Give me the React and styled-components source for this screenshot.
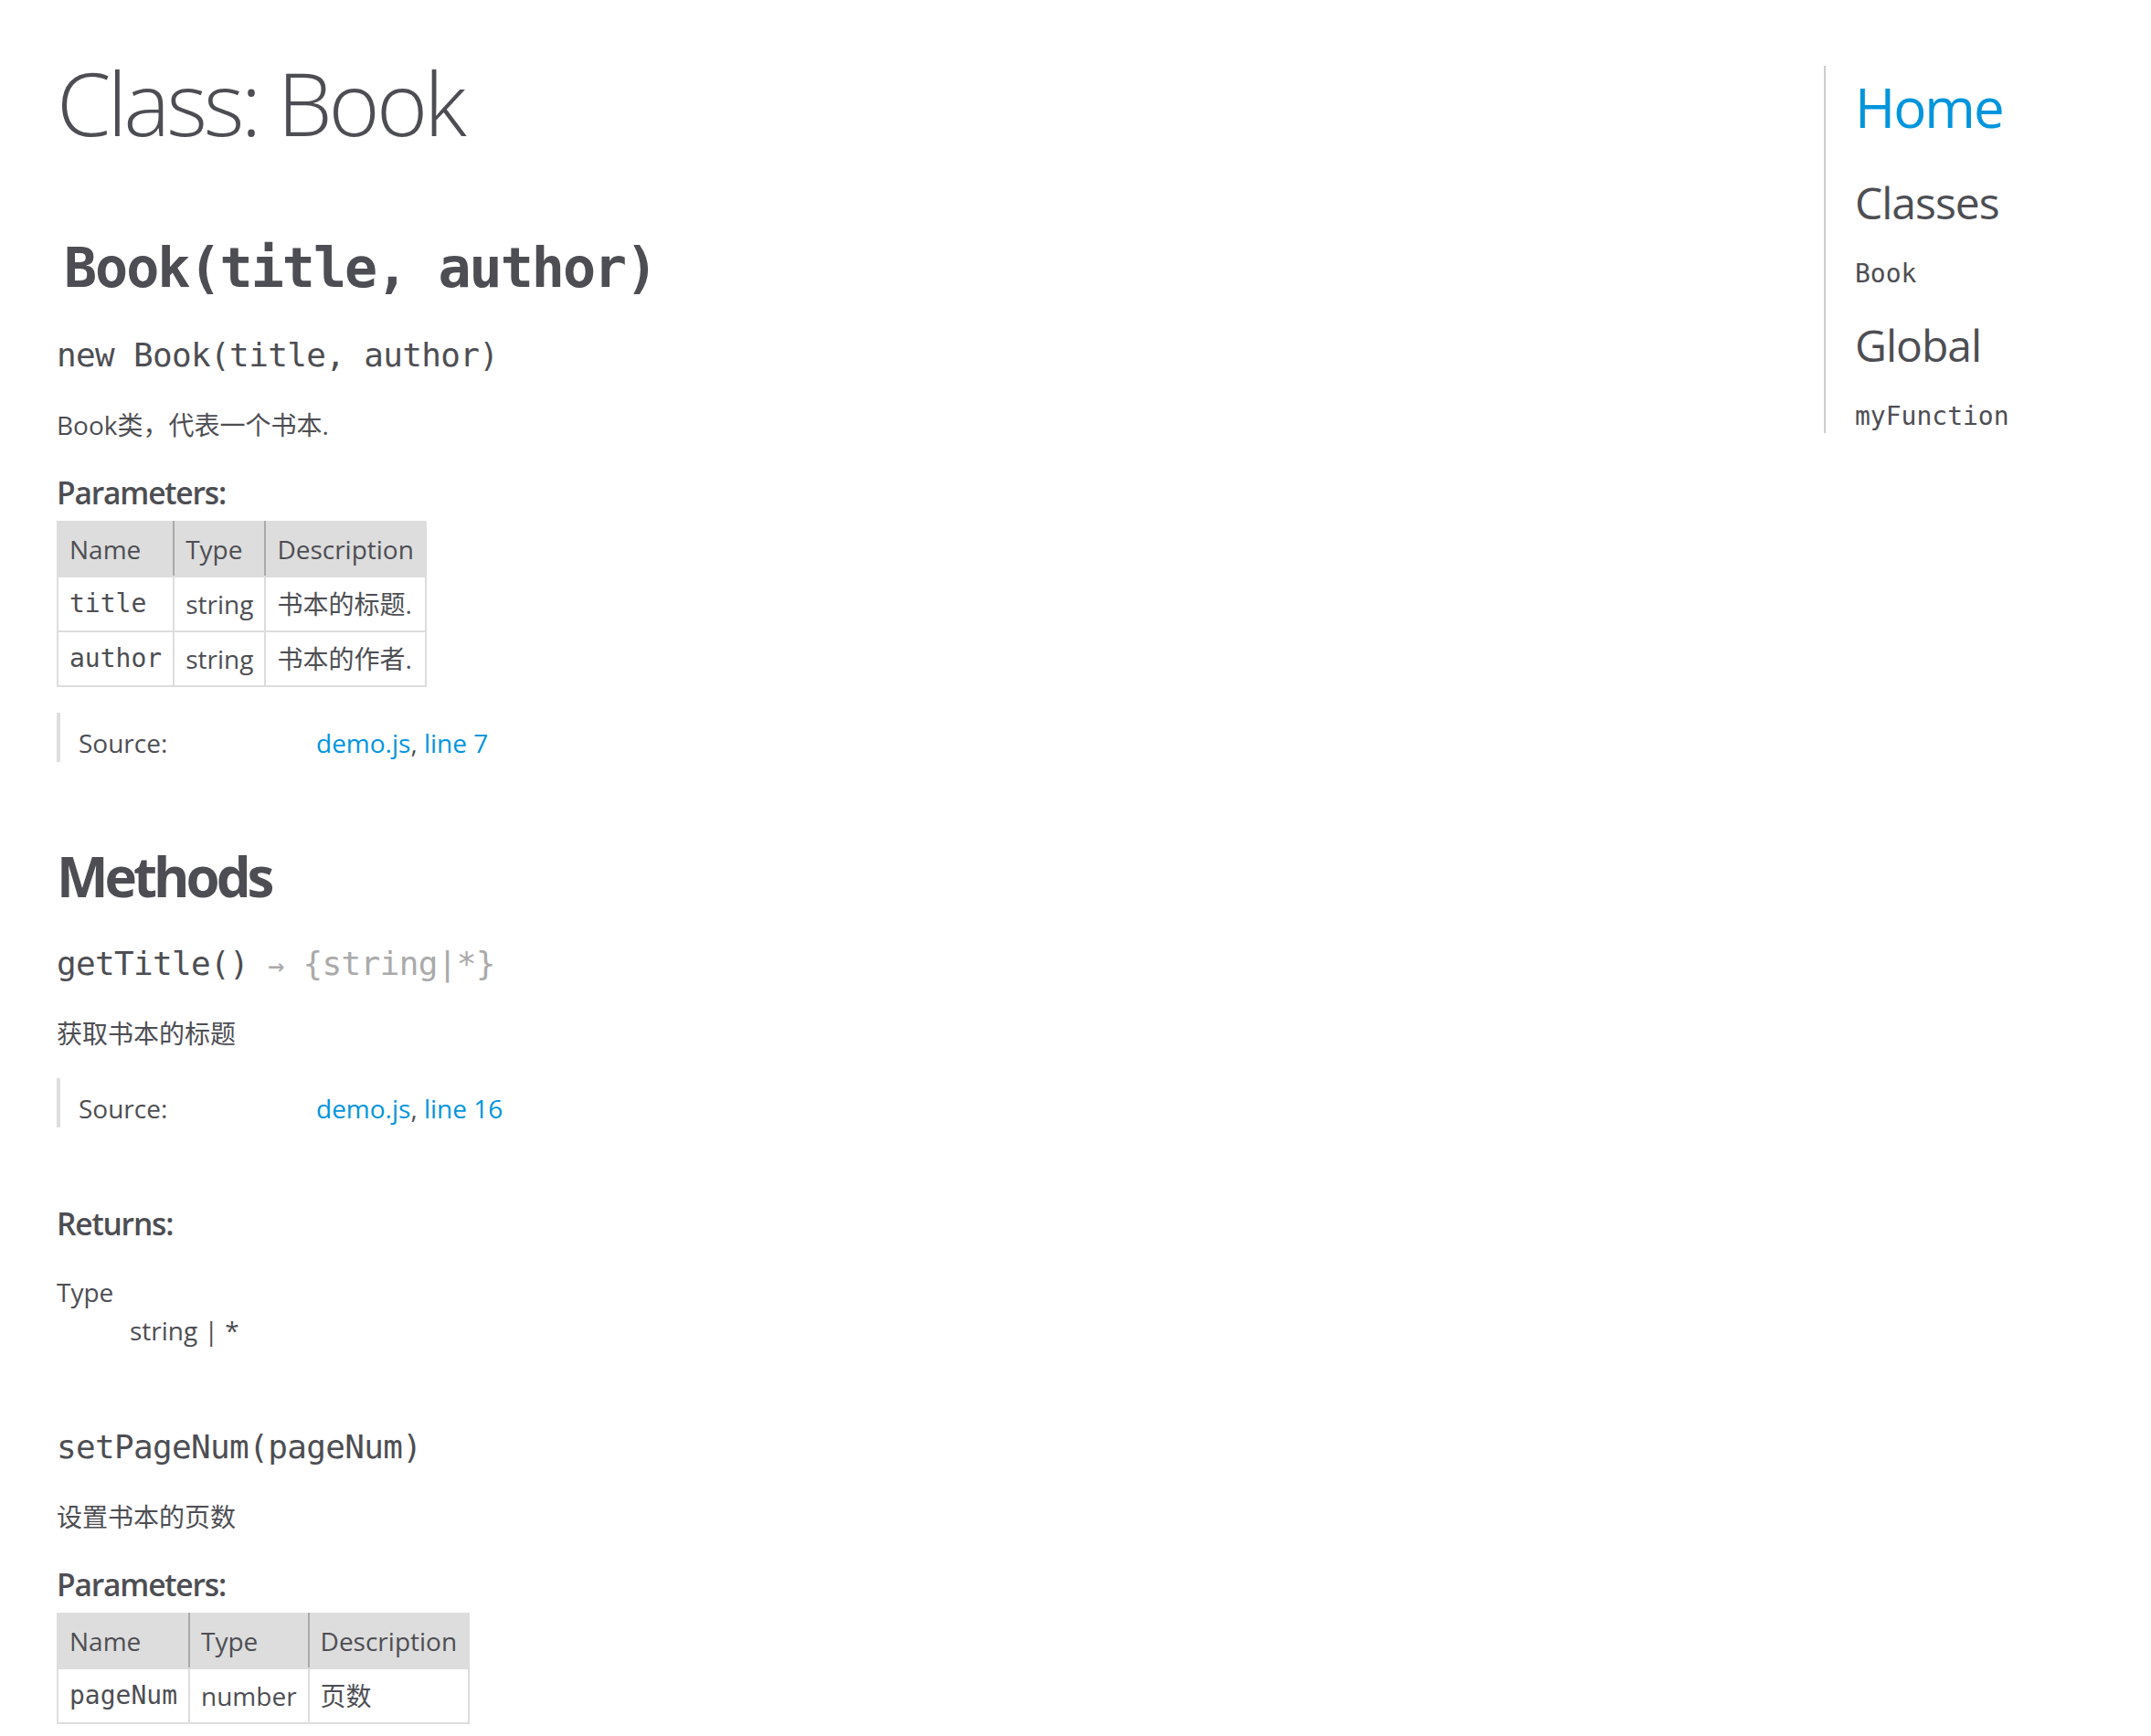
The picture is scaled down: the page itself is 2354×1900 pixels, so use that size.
import styled, { createGlobalStyle } from "styled-components";

const sans = `"Open Sans", "Noto Sans CJK SC", sans-serif`;
const mono = `"DejaVu Sans Mono", "Noto Sans CJK SC", monospace`;

const GlobalStyle = createGlobalStyle`
  html {
    background-color: #fff;
    font-size: 28px;
  }

  body {
    margin: 16px 16px 16px 14px;
    font-family: ${sans};
    line-height: 1.5;
    color: #4d4e53;
    background-color: #fff;
  }
`;

const Page = styled.div`
  display: flex;
  align-items: flex-start;
`;

const Main = styled.div`
  flex: 1;
  min-width: 0;
`;

const PageTitle = styled.h1`
  font-family: ${sans};
  font-size: 96px;
  font-weight: 300;
  letter-spacing: -4px;
  margin: 24px 48px 40px;
`;

const Section = styled.section`
  display: block;
  background-color: #fff;
  padding: 24px 48px;
  margin-right: 60px;
  border-bottom: 2px solid #ccc;
`;

const Header = styled.header`
  padding: 0 8px;
`;

const SignatureTitle = styled.h2`
  font-family: ${mono};
  font-size: 60px;
  font-weight: 700;
  letter-spacing: -2px;
  margin: 0 0 24px;
`;

const MemberName = styled.h4`
  font-family: ${mono};
  font-size: 36px;
  font-weight: 400;
  letter-spacing: -0.66px;
  margin: 0 0 24px;
  color: #4d4e53;
`;

const TypeSignature = styled.span`
  color: #aaa;
`;

const Arrow = styled.span`
  font-size: 30px;
`;

const Description = styled.div`
  margin: 28px 0;
`;

const SubTitle = styled.h5`
  font-size: 120%;
  font-weight: 600;
  letter-spacing: -1.2px;
  margin: 16px 0 6px;
`;

const SectionTitle = styled.h3`
  font-size: 60px;
  font-weight: 700;
  letter-spacing: -4px;
  margin: 0 0 24px;
`;

const ParamsTable = styled.table`
  border-spacing: 0;
  border: 0;
  border-collapse: collapse;
`;

const HeadRow = styled.tr`
  background-color: #ddd;
`;

const Th = styled.th`
  border: 2px solid #ddd;
  border-right: 2px solid #aaa;
  font-weight: 400;
  text-align: left;
  vertical-align: top;
  padding: 8px 12px;

  &:last-child {
    border-right: 2px solid #ddd;
  }
`;

const Td = styled.td`
  border: 2px solid #ddd;
  text-align: left;
  vertical-align: top;
  padding: 8px 12px;
  font-family: ${(props) => (props.$code ? mono : sans)};
`;

const Details = styled.dl`
  display: flex;
  margin: 28px 0 80px;
  border-left: 4px solid #ddd;
`;

const DetailLabel = styled.dt`
  width: 240px;
  padding: 12px 0 0 20px;
`;

const DetailValue = styled.dd`
  margin: 0;
  padding: 12px 0 0 20px;
`;

const Link = styled.a`
  color: #0095dd;
  text-decoration: none;
`;

const ReturnsList = styled.dl`
  margin: 28px 0 80px;
`;

const ReturnsValue = styled.dd`
  margin-left: 80px;
`;

const Nav = styled.nav`
  width: 342px;
  box-sizing: border-box;
  margin-top: 56px;
  border-left: 2px solid #ccc;
  padding-left: 32px;
`;

const NavHome = styled.h2`
  font-size: 60px;
  font-weight: 400;
  letter-spacing: -2px;
  margin: 0 0 24px;

  a {
    color: #0095dd;
    text-decoration: none;
  }
`;

const NavHeading = styled.h3`
  font-size: 48px;
  font-weight: 400;
  letter-spacing: -1px;
  margin: 24px 0 24px;
`;

const NavList = styled.ul`
  font-family: "Liberation Sans", sans-serif;
  line-height: 34px;
  padding: 0;
  margin: 0;
  list-style-type: none;
`;

const NavItem = styled.li`
  margin-top: 12px;
`;

const NavLink = styled.a`
  font-family: ${mono};
  line-height: 36px;
  color: #4d4e53;
  text-decoration: none;
`;

const SourceDetails = ({ line }) => (
  <Details>
    <DetailLabel>Source:</DetailLabel>
    <DetailValue>
      <Link href="#">demo.js</Link>, <Link href="#">{`line ${line}`}</Link>
    </DetailValue>
  </Details>
);

const Params = ({ rows }) => (
  <ParamsTable>
    <thead>
      <HeadRow>
        <Th>Name</Th>
        <Th>Type</Th>
        <Th>Description</Th>
      </HeadRow>
    </thead>
    <tbody>
      {rows.map((row) => (
        <tr key={row.name}>
          <Td $code>{row.name}</Td>
          <Td>{row.type}</Td>
          <Td>{row.description}</Td>
        </tr>
      ))}
    </tbody>
  </ParamsTable>
);

const App = () => {
  return (
    <Page>
      <GlobalStyle />
      <Main>
        <PageTitle>Class: Book</PageTitle>
        <Section>
          <Header>
            <SignatureTitle>Book(title, author)</SignatureTitle>
          </Header>
          <article>
            <div>
              <MemberName>new Book(title, author)</MemberName>
              <Description>Book类，代表一个书本.</Description>
              <SubTitle>Parameters:</SubTitle>
              <Params
                rows={[
                  { name: "title", type: "string", description: "书本的标题." },
                  { name: "author", type: "string", description: "书本的作者." },
                ]}
              />
              <SourceDetails line={7} />
            </div>

            <SectionTitle>Methods</SectionTitle>

            <MemberName>
              getTitle()
              <TypeSignature>
                {" "}
                <Arrow>→</Arrow> {"{string|*}"}
              </TypeSignature>
            </MemberName>
            <Description>获取书本的标题</Description>
            <SourceDetails line={16} />
            <SubTitle>Returns:</SubTitle>
            <ReturnsList>
              <dt>Type</dt>
              <ReturnsValue>string | *</ReturnsValue>
            </ReturnsList>

            <MemberName>setPageNum(pageNum)</MemberName>
            <Description>设置书本的页数</Description>
            <SubTitle>Parameters:</SubTitle>
            <Params
              rows={[{ name: "pageNum", type: "number", description: "页数" }]}
            />
          </article>
        </Section>
      </Main>

      <Nav>
        <NavHome>
          <a href="#">Home</a>
        </NavHome>
        <NavHeading>Classes</NavHeading>
        <NavList>
          <NavItem>
            <NavLink href="#">Book</NavLink>
          </NavItem>
        </NavList>
        <NavHeading>Global</NavHeading>
        <NavList>
          <NavItem>
            <NavLink href="#">myFunction</NavLink>
          </NavItem>
        </NavList>
      </Nav>
    </Page>
  );
};

export default App;
